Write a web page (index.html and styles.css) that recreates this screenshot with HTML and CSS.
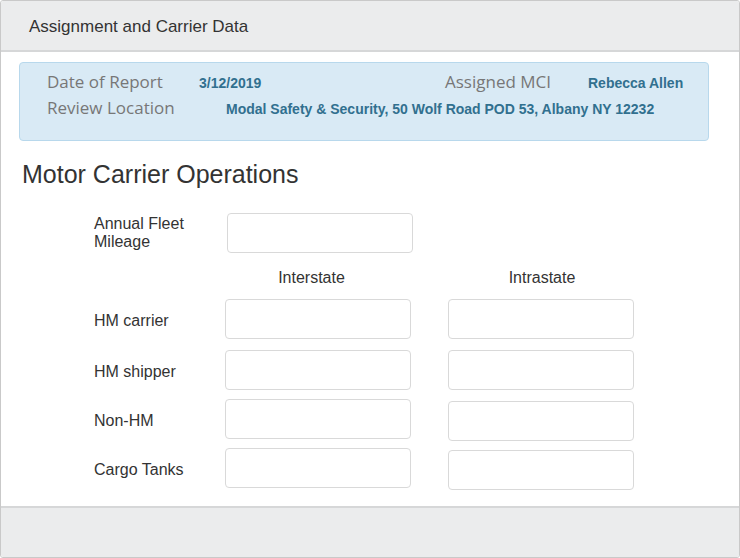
FILE: index.html
```html
<!DOCTYPE html>
<html lang="en">
<head>
<meta charset="utf-8">
<title>Assignment and Carrier Data</title>
<link rel="stylesheet" href="styles.css">
</head>
<body>
<div class="panel">
  <div class="panel-header">Assignment and Carrier Data</div>
  <div class="panel-body">
    <div class="info-box">
      <div class="info-row">
        <span class="info-label w-date">Date of Report</span>
        <span class="info-value w-dval">3/12/2019</span>
        <span class="info-label w-mci">Assigned MCI</span>
        <span class="info-value">Rebecca Allen</span>
      </div>
      <div class="info-row">
        <span class="info-label w-loc">Review Location</span>
        <span class="info-value">Modal Safety &amp; Security, 50 Wolf Road POD 53, Albany NY 12232</span>
      </div>
    </div>

    <h2 class="section-title">Motor Carrier Operations</h2>

    <div class="form">
      <div class="form-row row-annual">
        <label class="form-label two-line">Annual Fleet<br>Mileage</label>
        <input class="form-input annual-input" type="text">
      </div>
      <div class="form-head">
        <span></span>
        <span class="col-head head-inter">Interstate</span>
        <span class="col-head head-intra">Intrastate</span>
      </div>
      <div class="form-row">
        <label class="form-label">HM carrier</label>
        <input class="form-input" type="text">
        <input class="form-input" type="text">
      </div>
      <div class="form-row gap-lg">
        <label class="form-label">HM shipper</label>
        <input class="form-input" type="text">
        <input class="form-input" type="text">
      </div>
      <div class="form-row">
        <label class="form-label">Non-HM</label>
        <input class="form-input" type="text">
        <input class="form-input shift" type="text">
      </div>
      <div class="form-row">
        <label class="form-label">Cargo Tanks</label>
        <input class="form-input" type="text">
        <input class="form-input shift" type="text">
      </div>
    </div>
  </div>
  <div class="panel-footer"></div>
</div>
</body>
</html>
```

FILE: styles.css
```css
* { box-sizing: border-box; }

html, body {
  margin: 0;
  padding: 0;
  background: #ffffff;
}

body {
  font-family: "Liberation Sans", Arial, sans-serif;
  color: #333333;
}

.panel {
  width: 740px;
  height: 558px;
  border: 1px solid #c9c9c9;
  border-radius: 3px;
  display: flex;
  flex-direction: column;
  overflow: hidden;
}

.panel-header {
  height: 51px;
  flex: 0 0 51px;
  background: #ebeced;
  border-bottom: 2px solid #d6d7d8;
  padding: 1px 0 0 28px;
  font-size: 17px;
  line-height: 49px;
  color: #333333;
}

.panel-body {
  flex: 1;
  padding: 10px 0 0 18px;
}

.panel-footer {
  flex: 0 0 51px;
  background: #ebeced;
  border-top: 2px solid #d6d7d8;
}

.info-box {
  width: 690px;
  height: 79px;
  background: #d9eaf5;
  border: 1px solid #b8d8ec;
  border-radius: 4px;
  padding: 6px 0 0 27px;
}

.info-row {
  display: flex;
  align-items: baseline;
  height: 26px;
}

.info-label {
  font-family: "Open Sans", "Liberation Sans", sans-serif;
  font-size: 17px;
  line-height: 26px;
  color: #777777;
  flex: none;
}

.w-date { width: 152px; }
.w-mci { width: 143px; }
.w-loc { width: 179px; }
.w-dval { width: 246px; flex: none; }

.info-value {
  font-family: "Liberation Sans", Arial, sans-serif;
  font-weight: bold;
  font-size: 14px;
  line-height: 1;
  color: #31708f;
  white-space: nowrap;
}

.section-title {
  margin: 18px 0 0 3px;
  font-size: 25px;
  line-height: 30px;
  font-weight: normal;
  color: #333333;
}

.form {
  margin-top: 24px;
  padding-left: 75px;
}

.form-row,
.form-head {
  display: grid;
  grid-template-columns: 94px 186px 186px;
  column-gap: 37px;
  align-items: center;
}

.form-row { margin-top: 9px; height: 40px; }
.form-row.gap-lg { margin-top: 11px; }
.form-row.row-annual { margin-top: 0; }

.form-head {
  margin-top: 11px;
  height: 28px;
  margin-bottom: -2px;
}

.col-head {
  font-size: 16px;
  line-height: 28px;
  text-align: center;
  color: #333333;
}
.head-inter { padding-right: 13px; }
.head-intra { padding-left: 2px; }

.form-label {
  font-size: 16px;
  line-height: 18px;
  color: #333333;
  padding-top: 3px;
}
.form-label.two-line { padding-top: 0; }

.form-input {
  height: 40px;
  width: 186px;
  border: 1px solid #d9d9d9;
  border-radius: 4px;
  background: #ffffff;
  padding: 6px 12px;
  font-size: 14px;
  font-family: "Liberation Sans", Arial, sans-serif;
  margin: 0;
  outline: none;
}

.annual-input { margin-left: 2px; }
.shift { position: relative; top: 2px; }
```
